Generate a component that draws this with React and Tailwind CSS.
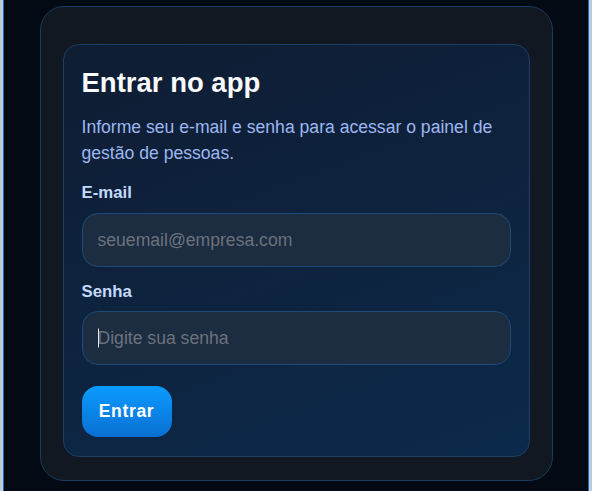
import React from "react";

export default function App() {
  const font = { fontFamily: '"Liberation Sans", Arial, sans-serif' };
  return (
    <div className="h-[491px] w-full bg-[#c5c9ce] px-[3px]" style={font}>
      <div className="h-full border-x border-[#0b6fd8] bg-[#030a14] pt-[6px]">
        <div className="mx-auto w-[513px] h-[475px] rounded-[24px] border border-[#1a3a60] bg-[#111821] pt-[37px] px-[22px] pb-[22px]">
          <div className="rounded-[16px] border border-[#1b3f66] bg-[linear-gradient(160deg,#0f1d33_0%,#0d2440_60%,#0b2a4b_100%)] pt-[22px] px-[18px] pb-[19px]">
            <h1 className="text-[27.5px] leading-[32px] font-bold text-[#f8fafc]">Entrar no app</h1>
            <p className="mt-[15px] text-[17.6px] leading-[26px] text-[#9db7f2]">
              Informe seu e-mail e senha para acessar o painel de gestão de pessoas.
            </p>
            <label className="mt-[17px] block text-[16.8px] leading-[20px] font-bold text-[#c3dafe]">E-mail</label>
            <input
              type="email"
              placeholder="seuemail@empresa.com"
              className="mt-[10px] block h-[54px] w-full rounded-[16px] border border-[#1d4a78] bg-[#1c2c41] px-[15px] text-[17.6px] text-[#e5e7eb] placeholder:text-[#6b727c] outline-none"
            />
            <label className="mt-[15px] block text-[16.8px] leading-[20px] font-bold text-[#c3dafe]">Senha</label>
            <div className="relative mt-[9px]">
              <input
                type="password"
                placeholder="Digite sua senha"
                className="block h-[54px] w-full rounded-[16px] border border-[#1d4a78] bg-[#1c2c41] px-[15px] text-[17.6px] text-[#e5e7eb] placeholder:text-[#6b727c] outline-none"
              />
              <span className="absolute left-[16px] top-1/2 h-[19px] w-px -translate-y-1/2 bg-[#e5e7eb]" />
            </div>
            <button className="mt-[21px] h-[51px] w-[90px] rounded-[16px] bg-[linear-gradient(180deg,#0a9bff_0%,#0a6fd2_100%)] text-[17.5px] font-bold tracking-[0.04em] text-white">
              Entrar
            </button>
          </div>
        </div>
      </div>
    </div>
  );
}
